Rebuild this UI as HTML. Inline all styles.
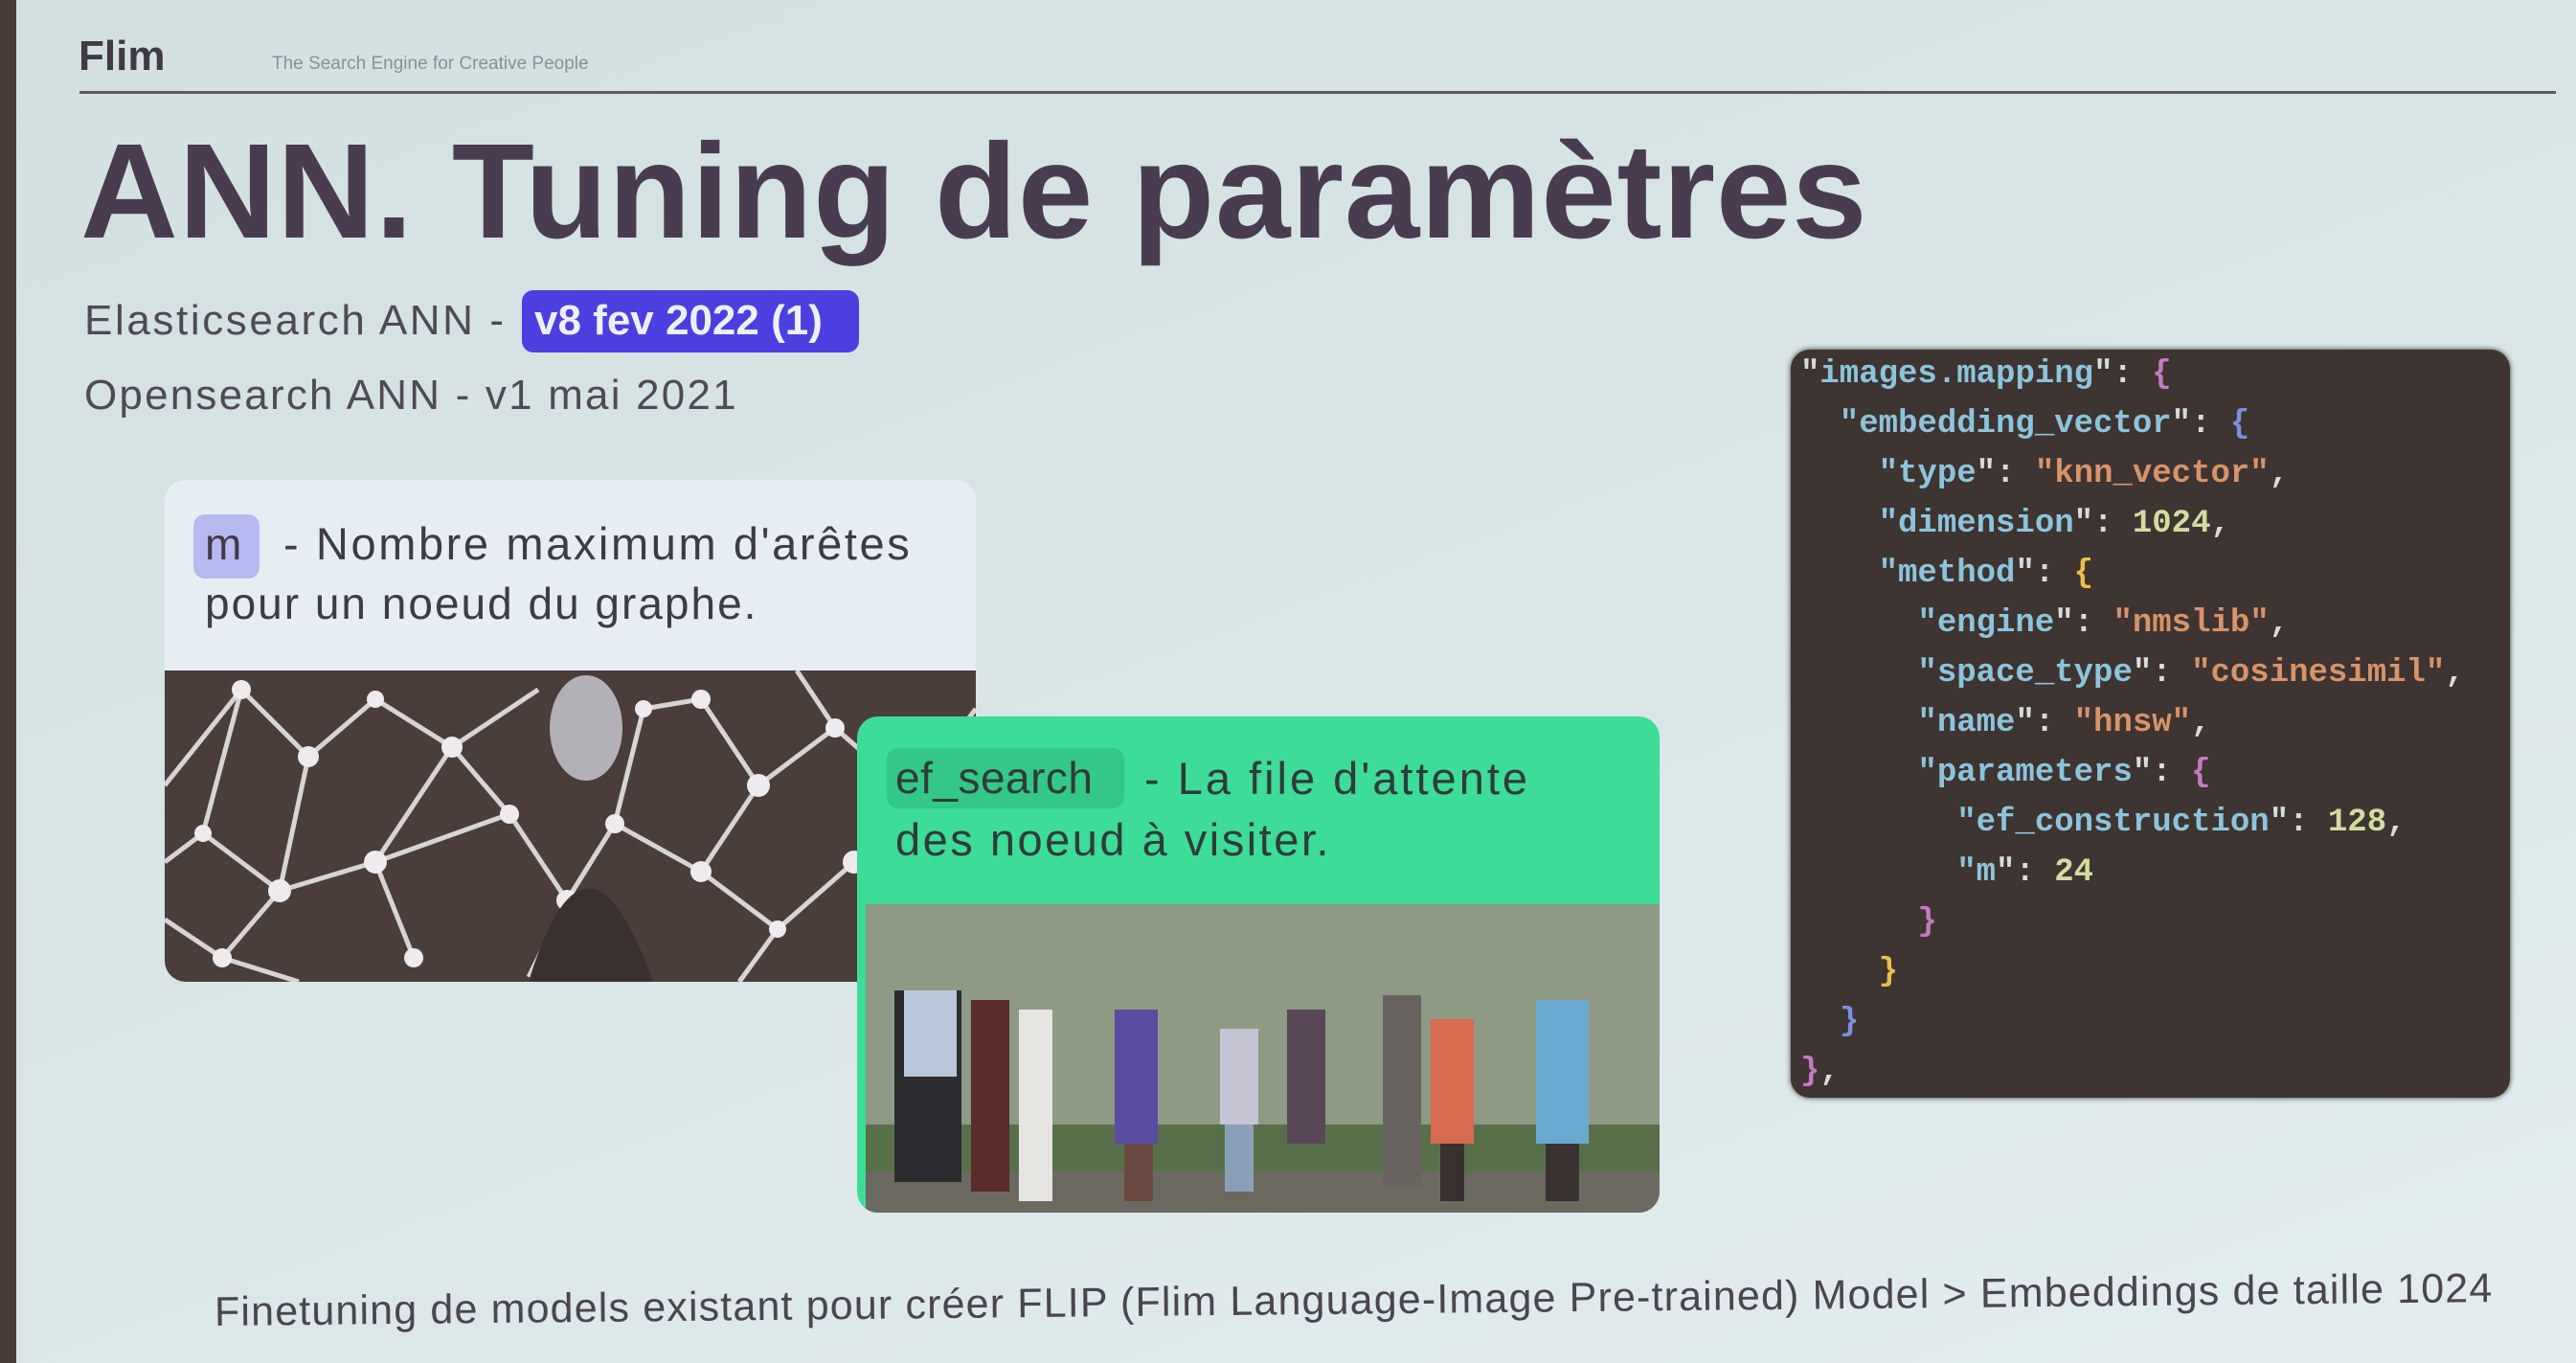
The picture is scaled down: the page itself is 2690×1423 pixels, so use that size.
<!DOCTYPE html>
<html><head><meta charset="utf-8"><style>
html,body{margin:0;padding:0}
body{width:2690px;height:1423px;position:relative;overflow:hidden;background:linear-gradient(160deg,#d2e0e2 0%,#d9e5e7 50%,#e3edef 100%);font-family:"Liberation Sans",sans-serif;color:#4a3f4f}
.a{position:absolute;white-space:nowrap}
.code{font-family:"Liberation Mono",monospace;font-weight:bold;font-size:34px;line-height:52px;color:#8cc4dc}
.s{color:#d6946a}.n{color:#d4dca0}.p{color:#c27cc4}.y{color:#e6c04c}.b{color:#7f8fe0}.w{color:#d8dce0}
</style></head><body>
<div class="a" style="left:0;top:0;width:17px;height:1423px;background:#4c3c38"></div>
<div class="a" style="left:82px;top:34px;font-size:44px;font-weight:bold;color:#3f3a44">Flim</div>
<div class="a" style="left:284px;top:56px;font-size:19px;color:#8a8f96">The Search Engine for Creative People</div>
<div class="a" style="left:83px;top:95px;width:2586px;height:3px;background:#5c5a60"></div>
<div class="a" style="left:84px;top:118px;font-size:141px;font-weight:bold;color:#4a3c50;letter-spacing:0.8px">ANN. Tuning de paramètres</div>
<div class="a" style="left:88px;top:310px;font-size:44px;color:#4f4a56;letter-spacing:2.6px">Elasticsearch ANN -</div>
<div class="a" style="left:545px;top:303px;width:352px;height:65px;background:#4b3fe0;border-radius:12px"></div>
<div class="a" style="left:558px;top:310px;font-size:44px;font-weight:bold;color:#eef0ff">v8 fev 2022 (1)</div>
<div class="a" style="left:88px;top:388px;font-size:44px;color:#4f4a56;letter-spacing:2.2px">Opensearch ANN - v1 mai 2021</div>

<!-- card 1 -->
<div class="a" style="left:172px;top:501px;width:847px;height:524px;border-radius:22px;overflow:hidden;background:#e6eef4">
  <svg width="847" height="325" style="position:absolute;left:0;top:199px" viewBox="0 0 847 325">
    <rect width="847" height="325" fill="#4a3d3a"/>
    <g stroke="#d8d4d4" stroke-width="5" fill="none">
      <path d="M0 120 L80 20 L150 90 L220 30 L300 80 L390 20 M80 20 L40 170 L120 230 L60 300 M150 90 L120 230 L220 200 L300 80 M220 200 L260 300 M220 200 L360 150 L420 240 L380 320 M360 150 L300 80 M560 30 L620 120 L700 60 L780 130 L847 40 M620 120 L560 210 L640 270 L720 200 L780 130 M560 210 L470 160 L420 240 M720 200 L847 250 M640 270 L600 325 M0 260 L60 300 L140 325 M470 160 L500 40 L560 30 M700 60 L660 0 M40 170 L0 200"/>
    </g>
    <g fill="#eeeaee">
      <circle cx="80" cy="20" r="10"/><circle cx="150" cy="90" r="11"/><circle cx="220" cy="30" r="9"/><circle cx="300" cy="80" r="11"/><circle cx="40" cy="170" r="9"/><circle cx="120" cy="230" r="12"/><circle cx="60" cy="300" r="10"/><circle cx="220" cy="200" r="12"/><circle cx="360" cy="150" r="10"/><circle cx="420" cy="240" r="11"/><circle cx="560" cy="30" r="10"/><circle cx="620" cy="120" r="12"/><circle cx="700" cy="60" r="10"/><circle cx="780" cy="130" r="11"/><circle cx="560" cy="210" r="11"/><circle cx="640" cy="270" r="9"/><circle cx="720" cy="200" r="12"/><circle cx="470" cy="160" r="10"/><circle cx="500" cy="40" r="9"/><circle cx="260" cy="300" r="10"/>
    </g>
    <ellipse cx="440" cy="60" rx="38" ry="55" fill="#b4b0b8"/>
    <path d="M380 325 Q440 130 510 325Z" fill="#3a302e"/>
  </svg>
  <div class="a" style="left:30px;top:36px;width:69px;height:67px;border-radius:12px;background:#b7baf0"></div>
  <div class="a" style="left:42px;top:40px;font-size:46px;color:#3f3a4a">m</div>
  <div class="a" style="left:124px;top:39px;font-size:47px;color:#3f3a4a;letter-spacing:2.6px">- Nombre maximum d'arêtes</div>
  <div class="a" style="left:42px;top:102px;font-size:46px;color:#3f3a4a;letter-spacing:2px">pour un noeud du graphe.</div>
</div>

<!-- card 2 -->
<div class="a" style="left:895px;top:748px;width:838px;height:518px;border-radius:22px;overflow:hidden;background:#3ddc97">
  <svg width="838" height="322" style="position:absolute;left:9px;top:196px" viewBox="0 0 838 322">
    <rect width="838" height="322" fill="#8e9a84"/>
    <rect x="0" y="230" width="838" height="92" fill="#58704a"/>
    <rect x="0" y="280" width="838" height="42" fill="#6c6a60"/>
    <g>
      <rect x="30" y="90" width="70" height="200" fill="#2c2c30"/><rect x="40" y="90" width="55" height="90" fill="#b8c8d8"/>
      <rect x="110" y="100" width="40" height="200" fill="#5a2c2a"/><rect x="160" y="110" width="35" height="200" fill="#e6e4e0"/>
      <rect x="260" y="110" width="45" height="140" fill="#5a4ca0"/><rect x="270" y="250" width="30" height="60" fill="#6a4a40"/>
      <rect x="370" y="130" width="40" height="100" fill="#c4c4d4"/><rect x="375" y="230" width="30" height="70" fill="#8aa0b8"/>
      <rect x="440" y="110" width="40" height="140" fill="#5a4858"/><rect x="540" y="95" width="40" height="200" fill="#6a6460"/>
      <rect x="590" y="120" width="45" height="130" fill="#d86a50"/><rect x="600" y="250" width="25" height="60" fill="#3a3030"/>
      <rect x="700" y="100" width="55" height="150" fill="#6aaad0"/><rect x="710" y="250" width="35" height="60" fill="#3a3230"/>
    </g>
  </svg>
  <div class="a" style="left:31px;top:33px;width:248px;height:63px;border-radius:12px;background:#34c886"></div>
  <div class="a" style="left:40px;top:37px;font-size:46px;color:#2f3c3a;letter-spacing:0.5px">ef_search</div>
  <div class="a" style="left:300px;top:37px;font-size:47px;color:#2f3c3a;letter-spacing:3px">- La file d'attente</div>
  <div class="a" style="left:40px;top:101px;font-size:47px;color:#2f3c3a;letter-spacing:2.5px">des noeud à visiter.</div>
</div>

<!-- code -->
<div class="a code" style="left:1870px;top:365px;width:751px;height:781px;border-radius:20px;background:#3e3431;box-shadow:0 0 6px #333;overflow:hidden">
<div style="position:absolute;left:10px;top:0">
<div><span class="w">"</span>images.mapping<span class="w">":</span> <span class="p">{</span></div>
<div>&nbsp;&nbsp;"embedding_vector<span class="w">":</span> <span class="b">{</span></div>
<div>&nbsp;&nbsp;&nbsp;&nbsp;"type<span class="w">":</span> <span class="s">"knn_vector"</span><span class="w">,</span></div>
<div>&nbsp;&nbsp;&nbsp;&nbsp;"dimension<span class="w">":</span> <span class="n">1024</span><span class="w">,</span></div>
<div>&nbsp;&nbsp;&nbsp;&nbsp;"method<span class="w">":</span> <span class="y">{</span></div>
<div>&nbsp;&nbsp;&nbsp;&nbsp;&nbsp;&nbsp;"engine<span class="w">":</span> <span class="s">"nmslib"</span><span class="w">,</span></div>
<div>&nbsp;&nbsp;&nbsp;&nbsp;&nbsp;&nbsp;"space_type<span class="w">":</span> <span class="s">"cosinesimil"</span><span class="w">,</span></div>
<div>&nbsp;&nbsp;&nbsp;&nbsp;&nbsp;&nbsp;"name<span class="w">":</span> <span class="s">"hnsw"</span><span class="w">,</span></div>
<div>&nbsp;&nbsp;&nbsp;&nbsp;&nbsp;&nbsp;"parameters<span class="w">":</span> <span class="p">{</span></div>
<div>&nbsp;&nbsp;&nbsp;&nbsp;&nbsp;&nbsp;&nbsp;&nbsp;"ef_construction<span class="w">":</span> <span class="n">128</span><span class="w">,</span></div>
<div>&nbsp;&nbsp;&nbsp;&nbsp;&nbsp;&nbsp;&nbsp;&nbsp;"m<span class="w">":</span> <span class="n">24</span></div>
<div>&nbsp;&nbsp;&nbsp;&nbsp;&nbsp;&nbsp;<span class="p">}</span></div>
<div>&nbsp;&nbsp;&nbsp;&nbsp;<span class="y">}</span></div>
<div>&nbsp;&nbsp;<span class="b">}</span></div>
<div><span class="p">}</span><span class="w">,</span></div>
</div>
</div>

<div class="a" style="left:224px;top:1346px;font-size:43px;color:#4a4550;transform:rotate(-0.6deg);transform-origin:left center;letter-spacing:1.15px">Finetuning de models existant pour créer FLIP (Flim Language-Image Pre-trained) Model &gt; Embeddings de taille 1024</div>
</body></html>
